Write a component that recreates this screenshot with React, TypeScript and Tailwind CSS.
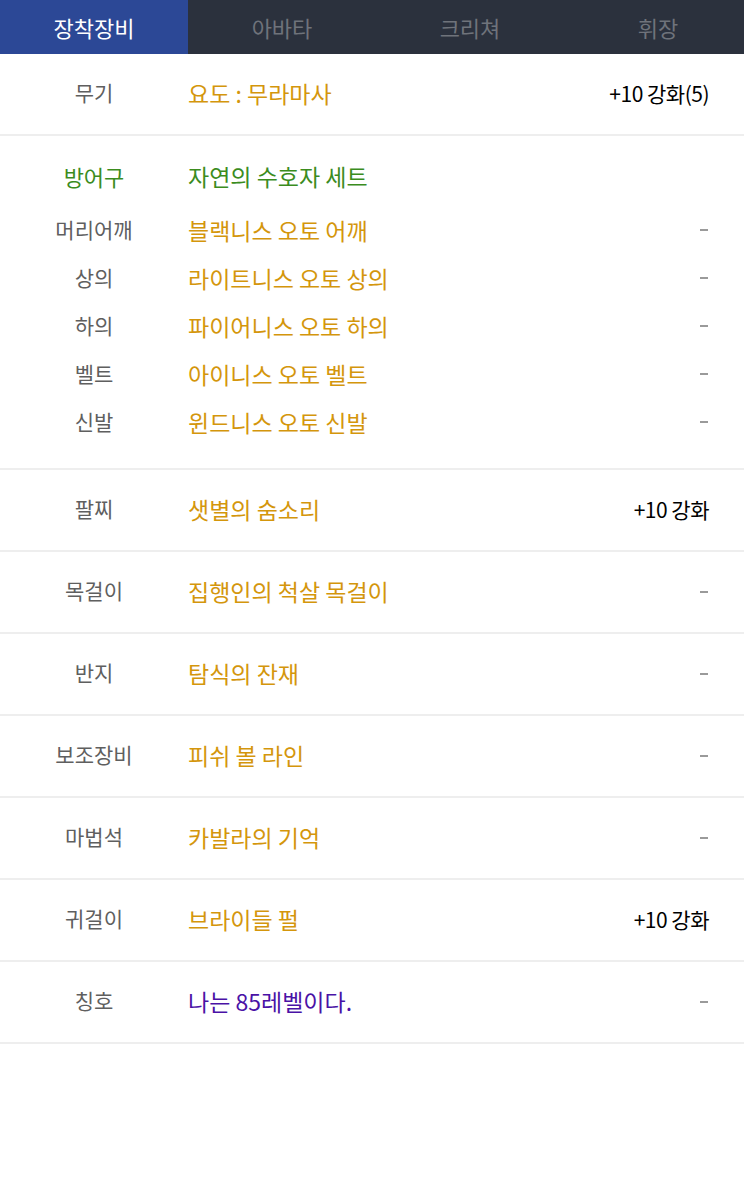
const font = { fontFamily: '"Noto Sans CJK KR", "Noto Sans", sans-serif' };

type Row = { label: string; name: string; extra: string; color?: string };

const tabs = ["장착장비", "아바타", "크리쳐", "휘장"];

const armor: Row[] = [
  { label: "머리어깨", name: "블랙니스 오토 어깨", extra: "-" },
  { label: "상의", name: "라이트니스 오토 상의", extra: "-" },
  { label: "하의", name: "파이어니스 오토 하의", extra: "-" },
  { label: "벨트", name: "아이니스 오토 벨트", extra: "-" },
  { label: "신발", name: "윈드니스 오토 신발", extra: "-" },
];

const rows: Row[] = [
  { label: "팔찌", name: "샛별의 숨소리", extra: "+10 강화" },
  { label: "목걸이", name: "집행인의 척살 목걸이", extra: "-" },
  { label: "반지", name: "탐식의 잔재", extra: "-" },
  { label: "보조장비", name: "피쉬 볼 라인", extra: "-" },
  { label: "마법석", name: "카발라의 기억", extra: "-" },
  { label: "귀걸이", name: "브라이들 펄", extra: "+10 강화" },
  { label: "칭호", name: "나는 85레벨이다.", extra: "-", color: "text-[#4a12a6]" },
];

function Extra({ text }: { text: string }) {
  if (text === "-") return <span className="mr-[1px] block h-[1.5px] w-[8px] bg-[#9a9a9a]" />;
  return <span className="text-[21px] tracking-[-0.5px] text-black">{text}</span>;
}

function ItemRow({ row }: { row: Row }) {
  return (
    <div className="flex h-[82px] items-center border-b-2 border-[#eeeeee] pr-[35px]">
      <div className="w-[188px] pb-[2px] text-center text-[21px] text-[#5f5f5f]">{row.label}</div>
      <div className={`flex-1 pb-[2px] text-[23px] ${row.color ?? "text-[#d4960c]"}`}>{row.name}</div>
      <Extra text={row.extra} />
    </div>
  );
}

export default function App() {
  return (
    <div className="min-h-[1201px] w-[744px] bg-white" style={font}>
      <div className="flex h-[54px] overflow-hidden bg-[#2b313d]">
        {tabs.map((t, i) => (
          <div
            key={t}
            className={`flex w-[188px] shrink-0 items-center justify-center text-[22px] ${
              i === 0 ? "bg-[#2c4896] text-white" : "text-[#6f737b]"
            }`}
          >
            {t}
          </div>
        ))}
      </div>

      <ItemRow row={{ label: "무기", name: "요도 : 무라마사", extra: "+10 강화(5)" }} />

      <div className="border-b-2 border-[#eeeeee] pt-[16px] pb-[22px] pr-[35px]">
        <div className="mb-[6px] flex h-[48px] items-center">
          <div className="w-[188px] text-center text-[22px] text-[#3b8c1e]">방어구</div>
          <div className="flex-1 text-[23px] text-[#3b8c1e]">자연의 수호자 세트</div>
        </div>
        {armor.map((r) => (
          <div key={r.label} className="flex h-[48px] items-center">
            <div className="w-[188px] text-center text-[21px] text-[#5f5f5f]">{r.label}</div>
            <div className="flex-1 text-[23px] text-[#d4960c]">{r.name}</div>
            <Extra text={r.extra} />
          </div>
        ))}
      </div>

      {rows.map((r) => (
        <ItemRow key={r.label} row={r} />
      ))}
    </div>
  );
}
